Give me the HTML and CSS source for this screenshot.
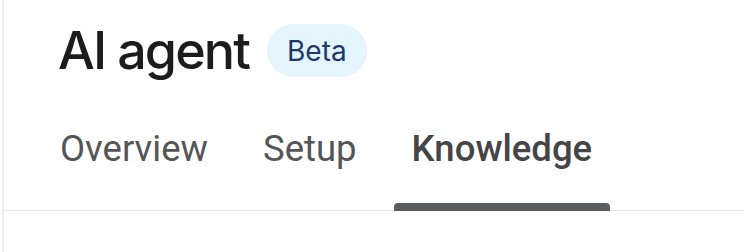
FILE: index.html
```html
<!DOCTYPE html>
<html>
<head>
<meta charset="utf-8">
<link rel="stylesheet" href="styles.css">
</head>
<body>
<div class="page">
  <header class="header">
    <h1 class="title">AI agent</h1>
    <span class="badge">Beta</span>
  </header>
  <nav class="tabs">
    <a class="tab">Overview</a>
    <a class="tab">Setup</a>
    <a class="tab tab-active">Knowledge</a>
  </nav>
</div>
</body>
</html>
```
FILE: styles.css
```css
html, body {
  margin: 0;
  padding: 0;
  background: #ffffff;
}
body {
  width: 744px;
  height: 252px;
  overflow: hidden;
}
.page {
  margin-left: 2px;
  border-left: 2px solid #ececec;
  height: 252px;
  box-sizing: border-box;
}
.header {
  display: flex;
  align-items: center;
  gap: 18px;
  padding-left: 54px;
  padding-top: 24px;
  height: 53px;
}
.title {
  margin: 0;
  font-family: "Inter", "Noto Sans", sans-serif;
  font-weight: 500;
  font-size: 52px;
  line-height: 53px;
  color: #1c1c1c;
  letter-spacing: -1.9px;
}
.badge {
  display: inline-flex;
  align-items: center;
  height: 53px;
  padding: 0 20px;
  border-radius: 27px;
  background: #e5f5fd;
  color: #1d3a6b;
  font-family: "Inter", "Noto Sans", sans-serif;
  font-size: 28px;
  box-sizing: border-box;
}
.tabs {
  display: flex;
  gap: 19px;
  margin-top: 51px;
  padding-left: 38px;
  border-bottom: 1.5px solid #ebebeb;
}
.tab {
  position: relative;
  padding: 0 18px 40px;
  font-family: "Roboto", "Liberation Sans", sans-serif;
  font-size: 36.5px;
  line-height: 42px;
  color: #555555;
}
.tab-active {
  color: #454545;
  font-weight: 500;
}
.tab-active::after {
  content: "";
  position: absolute;
  left: 0;
  right: 0;
  bottom: -1px;
  height: 8px;
  background: #5b5c5e;
  border-radius: 4px 4px 0 0;
}
```
